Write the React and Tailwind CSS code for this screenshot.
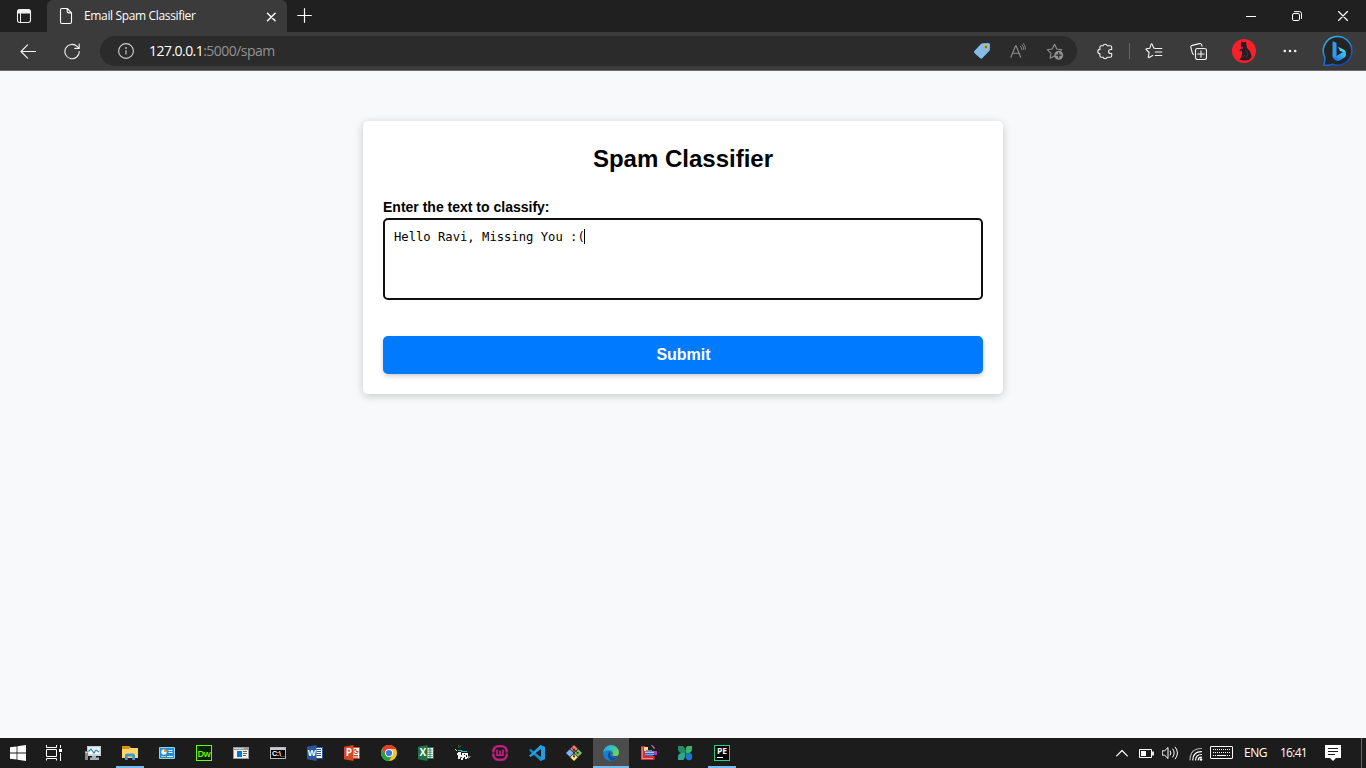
import React from "react";

function Icon({ w = 16, h, vb, children, className = "" }) {
  const hh = h || w;
  return (
    <svg
      width={w}
      height={hh}
      viewBox={vb || `0 0 ${w} ${hh}`}
      fill="none"
      stroke="currentColor"
      strokeWidth="1.1"
      strokeLinecap="round"
      strokeLinejoin="round"
      className={`block shrink-0 ${className}`}
    >
      {children}
    </svg>
  );
}

function TabStrip() {
  return (
    <div className="flex h-8 bg-[#202020] text-white">
      <div className="flex w-[47px] items-center pl-4">
        <Icon w={16} className="text-[#f0f0f0]">
          <rect x="1.5" y="1.5" width="13" height="13" rx="2.2" />
          <path d="M2 3.6Q2 2 3.6 2h8.8Q14 2 14 3.6V5H2Z" fill="currentColor" />
          <path d="M4.5 5v9" strokeWidth="1" />
        </Icon>
      </div>
      <div className="flex w-60 items-center rounded-t-[6px] bg-[#3b3b3b] pl-3">
        <Icon w={14} h={18}>
          <path d="M1.5 3Q1.5 1.5 3 1.5h5.2l4.3 4.3V15q0 1.5-1.5 1.5H3Q1.5 16.5 1.5 15Z" />
          <path d="M8.2 1.8V4.6q0 1.3 1.3 1.3h2.8" />
        </Icon>
        <div className="ml-[11px] w-[182px] whitespace-nowrap font-['Open_Sans',sans-serif] text-[12px] leading-4 tracking-[-0.35px]">
          Email Spam Classifier
        </div>
        <Icon w={10} className="mt-px">
          <path d="M1.5 1.2l7.6 7.6M9.1 1.2 1.5 8.8" strokeWidth="1.4" />
        </Icon>
      </div>
      <div className="flex w-[34px] items-center justify-center">
        <Icon w={15} className="-mt-px">
          <path d="M7.5 .7v13.6M.7 7.5h13.6" strokeWidth="1.2" />
        </Icon>
      </div>
      <div className="ml-auto flex">
        <div className="flex w-[46px] items-center justify-center">
          <Icon w={10}>
            <path d="M0 5.5h10" strokeWidth="1" strokeLinecap="butt" />
          </Icon>
        </div>
        <div className="flex w-[46px] items-center justify-center">
          <Icon w={10}>
            <rect x=".5" y="2.5" width="7" height="7" rx="1.4" strokeWidth="1" />
            <path d="M2.6 .6H7.5Q9.5 .6 9.5 2.6V7.4" strokeWidth="1" />
          </Icon>
        </div>
        <div className="flex w-[46px] items-center justify-center">
          <Icon w={10}>
            <path d="M.5 .5l9 9M9.5 .5l-9 9" strokeWidth="1.2" />
          </Icon>
        </div>
      </div>
    </div>
  );
}

function Toolbar() {
  return (
    <div className="flex h-[39px] items-center border-b border-[#6b6b6d] bg-[#3b3b3b] text-[#f3f3f3]">
      <div className="flex w-[56px] items-center justify-center">
        <Icon w={16} h={16} className="-mt-px">
          <path d="M15.5 8.5H1.2M7.6 1.8 1 8.5l6.6 6.7" />
        </Icon>
      </div>
      <div className="flex w-8 items-center justify-center">
        <Icon w={16} h={17}>
          <path d="M15.3 8.6A7.2 7.2 0 1 1 13.1 3.4L15.1 5.2M15.2 1v4.4h-4.4" />
        </Icon>
      </div>
      <div className="ml-3 flex h-[30px] w-[977px] items-center rounded-full bg-[#2b2b2b] pl-[18px]">
        <Icon w={16} className="text-[#d0d0d0]">
          <circle cx="8" cy="8" r="7.4" />
          <path d="M8 7.2v4.3" strokeLinecap="butt" />
          <circle cx="8" cy="5" r=".35" />
        </Icon>
        <div className="ml-[15px] whitespace-nowrap font-['Open_Sans',sans-serif] text-[14px] leading-5 tracking-[-0.54px] text-[#929292]">
          <span className="text-white">127.0.0.1</span>:5000/spam
        </div>
        <div className="ml-auto flex w-[113px] items-center">
          <div className="flex w-9 items-center justify-center">
            <Icon w={18}>
              <path
                d="M9.6 1.2 15.4 .9q1.6 0 1.6 1.6l-.2 5.2q0 .8-.6 1.4l-7 7.2q-1 .9-2 0L1.4 11q-.9-1 0-2L8.2 1.8q.6-.6 1.4-.6Z"
                fill="#83bdeb"
                stroke="none"
              />
              <circle cx="13" cy="5" r="1.5" fill="#5c5320" stroke="#e0b422" strokeWidth="1.2" />
            </Icon>
          </div>
          <div className="flex w-9 items-center justify-center text-[#8f8f8f]">
            <Icon w={16}>
              <path d="M.9 14.3 5.6 2.8h.5l4.6 11.5M2.6 10.2h6.5" />
              <path d="M10.5 3.3q1.4 1.3 1.3 3.4M12 1.8q2 2 1.8 4.8M13.5 .6q2.2 2.3 1.9 5.6" strokeWidth=".9" />
            </Icon>
          </div>
          <div className="flex w-9 items-center justify-center text-[#929292]">
            <Icon w={18} h={17} className="ml-px">
              <path d="M8.5 13 4.2 15.2 5 10.3 1.2 6.7l5-.7L8.5 1.2 10.8 6l5 .7-1 1" />
              <circle cx="12.7" cy="12.2" r="4.5" fill="currentColor" stroke="none" />
              <path d="M12.7 9.8v4.8M10.3 12.2h4.8" stroke="#2b2b2b" strokeWidth="1.2" />
            </Icon>
          </div>
        </div>
      </div>
      <div className="ml-2 flex w-10 items-center justify-center">
        <Icon w={16} h={17}>
          <path d="M4.4 2.7H6.1a2.1 1.9 0 0 1 4.1 0h3q1.5 0 1.5 1.5v2.3h-1.1a2 2 0 0 0 0 4h1.1v2.2q0 1.5-1.5 1.5h-3a2.1 1.9 0 0 1-4.1 0H4.4q-1.5 0-1.5-1.5v-2.1a2.1 2.1 0 0 1 0-4.2V4.2q0-1.5 1.5-1.5Z" />
        </Icon>
      </div>
      <div className="ml-1 h-4 w-px bg-[#666]" />
      <div className="ml-[2px] flex w-[44px] items-center justify-center">
        <Icon w={18} h={16}>
          <path d="M9.7 5.2H8.9L7.1 1.2q-.5-.9-1 0L4.8 5.3 1.3 5.8q-.5.3-.1.7L4.1 9.5 3.3 14q0 .9.8.5L7.7 12.4" />
          <path d="M10.5 5.5h6.3M10.3 9h6.5M10.3 12.5h6.5" />
        </Icon>
      </div>
      <div className="flex w-11 items-center justify-center">
        <Icon w={18} h={17}>
          <rect x="6.5" y="5.5" width="11" height="11" rx="2" />
          <path d="M12 7.8v6.4M8.8 11h6.4" />
          <path d="M4.6 11.4Q3.7 11 3.3 9.8L1.9 4.7Q1.4 2.9 3.2 2.4L10.4 .6q1.8-.3 2.3 1.4l.3 1.2" />
        </Icon>
      </div>
      <div className="ml-[12px] size-6">
        <svg width="24" height="24" viewBox="0 0 24 24" className="block">
          <circle cx="12" cy="12" r="12" fill="#f91f2b" />
          <path
            d="M9.6 1.8 10.8 3.4Q12 2.8 13.2 3.2L14 2.6 14.6 8 15.8 10Q18.4 11.8 18.9 15L19.6 18.2 17 21 11.6 21.6 7.4 20.4 9.6 18 10.2 13.4 9.4 11.6 7.2 12 9.2 9.2 8.9 6Z"
            fill="#251b20"
          />
          <path d="m9.4 7.8 1.4.3-.3 1.9-1 .2Z" fill="#9b5a48" />
          <path d="m13 11 3 4-2 4M10 19l3-3" stroke="#514047" fill="none" strokeWidth=".8" />
        </svg>
      </div>
      <div className="ml-3 flex w-11 items-center justify-center">
        <Icon w={14} h={4}>
          <g fill="currentColor" stroke="none">
            <circle cx="1.8" cy="2" r="1.3" />
            <circle cx="7" cy="2" r="1.3" />
            <circle cx="12.2" cy="2" r="1.3" />
          </g>
        </Icon>
      </div>
      <div className="ml-[10px]">
        <svg width="32" height="32" viewBox="0 0 32 32" className="block">
          <defs>
            <linearGradient id="bingRing" x1="0" y1="0" x2=".6" y2="1">
              <stop stopColor="#36c2e5" />
              <stop offset=".5" stopColor="#2189df" />
              <stop offset="1" stopColor="#1747bd" />
            </linearGradient>
            <linearGradient id="bingSwoosh" x1="0" y1="1" x2="1" y2="0">
              <stop stopColor="#1766e8" />
              <stop offset="1" stopColor="#46d3ee" />
            </linearGradient>
          </defs>
          <path
            d="M1.7 30Q3 26.5 2.9 22.4A14.3 14.3 0 1 1 10.6 29.2Q6 31 1.7 30Z"
            fill="#242424"
            stroke="url(#bingRing)"
            strokeWidth="1.5"
          />
          <path d="m10.6 6.2 3.2 1.2q.7.4.7 1.3v12.8l-2.3 2q-1.7-.6-1.7-2.6Z" fill="#2c9df5" />
          <path d="m16 11.8 5.6 2.6q2.6 1.3 2.4 4.7-.5-1.6-2.8-2l-3.2-1.2Z" fill="#46d3ee" />
          <path d="m11.4 23 9.1-5.8q3.6-.3 3.5 2.6 0 1.6-1.4 2.7l-4.8 2.9q-2.1 1-4.4-.1-1.6-.8-2-2.3Z" fill="url(#bingSwoosh)" />
        </svg>
      </div>
    </div>
  );
}

function Page() {
  return (
    <main className="h-[667px] bg-[#f8f9fa] pt-[50px] font-['Liberation_Sans',Arial,sans-serif] text-black">
      <div className="mx-auto h-[273px] w-[640px] rounded-[5px] bg-white px-5 pt-5 shadow-[0_2px_10px_rgba(0,0,0,0.2)]">
        <h1 className="text-center text-[24px] font-bold leading-9">Spam Classifier</h1>
        <label className="mt-5 block text-[14px] font-bold leading-[21px]">Enter the text to classify:</label>
        <div className="flex h-[82px] rounded-[5px] border-2 border-[#101010] bg-white pl-[9px] pt-[9px] font-['DejaVu_Sans_Mono',monospace] text-[12.2px] leading-4">
          <span className="w-[190px] whitespace-pre">Hello Ravi, Missing You :(</span>
          <span className="h-[15px] w-px bg-black" />
        </div>
        <button className="mt-9 block h-[38px] w-full rounded-[5px] bg-[#007bff] pl-px text-center text-[16px] font-bold leading-[38px] text-white shadow-[0_2px_5px_rgba(0,0,0,0.2)]">
          Submit
        </button>
      </div>
    </main>
  );
}

function Windows() {
  return (
    <svg width="16" height="16" viewBox="0 0 16 16" fill="#fff">
      <path d="M0 2.3 6.6 1.4V7.6H0ZM7.4 1.3 16 0V7.6H7.4ZM0 8.4H6.6v6.2L0 13.7ZM7.4 8.4H16V16L7.4 14.7Z" />
    </svg>
  );
}

function TaskView() {
  return (
    <svg width="16" height="16" viewBox="0 0 16 16" fill="none" stroke="#fff">
      <path d="M.5 0v2.5h10V0M.5 15.5V13.5h10v2M.5 4.5h10v7H.5ZM14.5 0v3M14.5 8v8" />
      <path d="M13 4h3v3h-3Z" fill="#fff" stroke="none" />
    </svg>
  );
}

function Monitor() {
  return (
    <svg width="18" height="16" viewBox="0 0 18 16">
      <path d="M3 1h14v10H3Z" fill="#c7cdd1" />
      <path d="M4.3 2.3h11.4v7H4.3Z" fill="#f1f8fb" />
      <path d="M4.5 6.5 7 4l3 4 2-3 3 2" fill="none" stroke="#2386b7" strokeWidth="1.1" />
      <path d="M8 11h4v1.5h3V15H6v-2.5h2Z" fill="#a9afb2" />
      <path d="M1 6h3v9H1Z" fill="#858c90" />
      <path d="M1.5 7h2v1h-2Z" fill="#d9dddf" />
    </svg>
  );
}

function Explorer() {
  return (
    <svg width="16" height="16" viewBox="0 0 16 16">
      <path d="M0 1h7l2 2h7v10H0Z" fill="#f5bd35" />
      <path d="M0 1h7l1 1.5L7 4H0Z" fill="#d9930f" />
      <path d="M0 4h7l1.5-1H16v10H0Z" fill="#ffd667" />
      <path d="M3 15V10.5q0-2 2-2h6q2 0 2 2V15h-2.7v-3.5H5.7V15Z" fill="#3f97d5" />
    </svg>
  );
}

function ControlPanel() {
  return (
    <svg width="16" height="14" viewBox="0 0 16 14">
      <rect y="1" width="16" height="12" rx="1" fill="#8bd0f5" />
      <rect x="1" y="2" width="14" height="10" fill="#268ed0" />
      <circle cx="5" cy="6" r="2.7" fill="#e9f6fc" />
      <path d="M5 6V3.3A2.7 2.7 0 0 1 7.7 6Z" fill="#f08b2a" />
      <path d="M9.5 4.5h4M9.5 6.5h4" stroke="#e9f6fc" />
      <path d="M2 10.5h5" stroke="#f8ba3e" />
      <path d="M8 10.5h6" stroke="#fff" />
    </svg>
  );
}

function Dreamweaver() {
  return (
    <span className="flex size-4 items-center justify-center border border-[#6ffa00] bg-[#072401] font-['Open_Sans',sans-serif] text-[9px] font-semibold leading-none tracking-[-0.4px] text-[#75f900]">
      Dw
    </span>
  );
}

function NewsApp() {
  return (
    <svg width="16" height="12" viewBox="0 0 16 12">
      <path d="M0 0h16v12H0Z" fill="#9a9a9a" />
      <path d="M1 3h14v8H1Z" fill="#f1f1f1" />
      <path d="M1 1h10v1H1Z" fill="#d7d7d7" />
      <path d="M4 4h5v6H4Z" fill="#0078d7" />
      <path d="M10 4.5h4M10 6.5h4M10 8.5h3" stroke="#646464" />
    </svg>
  );
}

function Terminal() {
  return (
    <span className="flex h-3 w-4 flex-col border border-[#b7bbbe] bg-black">
      <span className="h-0.5 shrink-0 bg-[#c5cbd0]" />
      <span className="whitespace-nowrap pl-px font-['Liberation_Sans',sans-serif] text-[7px] font-bold leading-[8px] tracking-[-0.2px] text-white">
        C:\_
      </span>
    </span>
  );
}

function OfficeIcon({ letter, color, kind }) {
  return (
    <svg width="16" height="16" viewBox="0 0 16 16">
      <path d="M8 2.5h7.5v11H8Z" fill="#fff" stroke={color} />
      {kind === "w" && <path d="M9.5 4.5h4.5M9.5 6.5h4.5M9.5 8.5h4.5M9.5 10.5h4.5" stroke={color} />}
      {kind === "p" && (
        <g stroke={color} fill="none">
          <path d="M9.5 10.5h4.5M9.5 12h4.5" />
          <path d="M12 4.2v2.3h2.2A2.2 2.2 0 1 1 12 4.2Z" />
        </g>
      )}
      {kind === "x" && <path d="M9.5 5h5M9.5 7.2h5M9.5 9.4h5M9.5 11.6h5M12 3v10" stroke={color} strokeWidth=".8" />}
      <path d="M0 1.8 9.5 0v16L0 14.2Z" fill={color} />
      <text x="4.8" y="11.4" textAnchor="middle" fill="#fff" fontFamily="Open Sans" fontSize={kind === "w" ? 8.5 : 10} fontWeight="700">
        {letter}
      </text>
    </svg>
  );
}

function Chrome() {
  return (
    <svg width="16" height="16" viewBox="0 0 16 16">
      <circle cx="8" cy="8" r="8" fill="#fbc617" />
      <path d="M8 8 4.6 10 1.07 4A8 8 0 0 1 14.93 4H8Z" fill="#e63b2e" />
      <path d="M1.07 4A8 8 0 0 0 8 16L11.4 10H8L4.6 10Z" fill="#259d49" />
      <circle cx="8" cy="8" r="4" fill="#fff" />
      <circle cx="8" cy="8" r="3.1" fill="#3978e5" />
    </svg>
  );
}

function PixelTool() {
  return (
    <svg width="16" height="16" viewBox="0 0 16 16" shapeRendering="crispEdges">
      <path d="M4 1h2v1H4ZM3 2h1v1H3ZM3 0h1v1H3Z" fill="#167028" />
      <path d="M0 4h1v1h1v1H1V5H0Z" fill="#f0dc45" />
      <path d="M3 7h3v1h7v5h-1v1h-2v-2H9v1H8v2H6v-2H5v1H3v-4H2V8h1Z" fill="#f4f4f4" />
      <path d="M3 5h4v1h5v1H6V6H3Z" fill="#18b6cb" />
      <path d="M6 8h1v2H6ZM9 9h1v1H9ZM11 10h1v2h-1Z" fill="#171717" />
      <path d="M5 12h2v1H5Z" fill="#c3252b" />
      <path d="M13 11h3v1h-1v1h-1v1h-1Z" fill="#777" />
    </svg>
  );
}

function Wamp() {
  return (
    <svg width="16" height="16" viewBox="0 0 16 16" fill="none" stroke="#d4198a">
      <rect x="1.3" y="1.3" width="13.4" height="13.4" rx="5" stroke="#8f2466" strokeWidth="2.6" />
      <rect x="1.3" y="1.3" width="13.4" height="13.4" rx="5" strokeWidth="1.4" />
      <path d="M5 4.5v5.7h2.2L8 9.4l.8.8H11V4.5M8 5.5v4" strokeWidth="1.6" />
      <path d="M0 8h3M13 8h3" stroke="#1c1c1c" />
    </svg>
  );
}

function VSCode() {
  return (
    <svg width="16" height="16" viewBox="0 0 16 16">
      <path d="m11.5 0 4.5 2v12l-4.5 2L1 6.2l-1-.9L1.4 4l1 .4L12 11.7V4.3Z" fill="#168bd2" />
      <path d="M11.5 0 1 9.8l-1 .9L1.4 12l1-.4L12 4.3v7.4l-.5 4.3L16 14V2Z" fill="#219fe2" />
      <path d="m11.7 4.3-4.8 3.7 4.8 3.7Z" fill="#1c1c1c" />
    </svg>
  );
}

function Git() {
  return (
    <svg width="16" height="16" viewBox="0 0 16 16">
      <path d="m8 0 3.8 3.8L8 7.6 4.2 3.8Z" fill="#f0786c" />
      <path d="m3.8 4.2 3.8 3.8-3.8 3.8L0 8Z" fill="#80b3ff" />
      <path d="m12.2 4.2 3.8 3.8-3.8 3.8L8.4 8Z" fill="#7fc257" />
      <path d="m8 8.4 3.8 3.8L8 16l-3.8-3.8Z" fill="#ffe681" />
      <path d="M6 2.5 8 5v7M8 5l3.5 2.5" fill="none" stroke="#363636" />
      <circle cx="8" cy="4.8" r="1.1" fill="#363636" />
      <circle cx="11.7" cy="8" r="1.1" fill="#363636" />
      <circle cx="8" cy="11.5" r="1.1" fill="#363636" />
    </svg>
  );
}

function Edge() {
  return (
    <svg width="16" height="16" viewBox="0 0 16 16">
      <defs>
        <linearGradient id="edgeTop" x1="0" y1="0" x2="1" y2=".5">
          <stop stopColor="#25a8e9" />
          <stop offset=".6" stopColor="#38c4b7" />
          <stop offset="1" stopColor="#65d65d" />
        </linearGradient>
      </defs>
      <path d="M0 8Q1 3.5 5.5 4 9.5 4.8 9 7.5 7.8 11 11 11.9 13 12.4 15 11.5 12.9 16 8 16A8 8 0 0 1 0 8Z" fill="#1681d1" />
      <path d="M.1 7A8 8 0 0 1 16 7.4q0 3.6-3.8 3.6-3.1 0-3.1-1.2 1.1-1 .5-2.6Q8.8 5 5.8 5 2.5 5 .1 7Z" fill="url(#edgeTop)" />
      <path d="M6.4 6.7Q3.8 9.4 5.5 12.9 7.2 15.6 9.8 15.7 13.2 14.8 15 11.8 11.2 13.6 8.6 11.8 6.5 9.8 7.6 7.2Z" fill="#124e98" />
    </svg>
  );
}

function Archive() {
  return (
    <svg width="17" height="16" viewBox="0 0 17 16">
      <path d="M1 1h4v10h9v4H1Z" fill="#cf2f36" />
      <path d="M2.2 2.2v11.3H13" fill="none" stroke="#ffaaa4" strokeWidth=".8" />
      <path d="M4 2h4v4H4Z" fill="#f2dd92" />
      <path d="M6 5h6v1H6Z" fill="#9d62dc" />
      <path d="M5 6h10v2H5Z" fill="#48a960" />
      <path d="M5 7.5h9M5 9.5h10" stroke="#b8e9fc" strokeWidth=".7" />
      <path d="M5 8h10v1H5ZM5 10h8v1H5Z" fill="#4358d9" />
      <path d="m11 0 1 0 3 3-1 1Z" fill="#c779ec" />
      <path d="M14 6h3v4h-3Z" fill="#a736c0" />
      <path d="M13 11h1.5v4H13Z" fill="#cf2f36" />
    </svg>
  );
}

function Clover() {
  return (
    <svg width="15" height="16" viewBox="0 0 15 16">
      <path d="M0 1h5q2 1 2 4v3H3Q0 7 0 4Z" fill="#258a62" />
      <path d="M14 1H9.5Q7.5 2 7.5 5v3H11q3-1 3-4Z" fill="#3bb36f" />
      <path d="M0 15v-3q0-3 3-4h4v3q0 3-2 4Z" fill="#31a58f" />
      <path d="M7.5 8H11q3 0 3 2l-5 4Q7.5 13 7.5 10Z" fill="#267c75" />
      <circle cx="11" cy="12" r="3.2" fill="#147bd4" />
    </svg>
  );
}

function PyCharmEdu() {
  return (
    <span className="flex size-4 flex-col border border-[#23d18b] bg-black pl-[2px] pt-px">
      <span className="font-['Open_Sans',sans-serif] text-[8.5px] font-bold leading-[8px] text-white">PE</span>
      <span className="mt-[2px] h-px w-1.5 bg-white" />
    </span>
  );
}

const PINNED = [
  { name: "monitor", icon: <Monitor /> },
  { name: "explorer", icon: <Explorer />, open: true },
  { name: "control", icon: <ControlPanel /> },
  { name: "dw", icon: <Dreamweaver /> },
  { name: "news", icon: <NewsApp /> },
  { name: "cmd", icon: <Terminal /> },
  { name: "word", icon: <OfficeIcon letter="W" color="#2b579a" kind="w" /> },
  { name: "ppt", icon: <OfficeIcon letter="P" color="#d24726" kind="p" /> },
  { name: "chrome", icon: <Chrome /> },
  { name: "excel", icon: <OfficeIcon letter="X" color="#217346" kind="x" /> },
  { name: "pixel", icon: <PixelTool /> },
  { name: "wamp", icon: <Wamp /> },
  { name: "code", icon: <VSCode /> },
  { name: "git", icon: <Git /> },
  { name: "edge", icon: <Edge />, active: true },
  { name: "archive", icon: <Archive /> },
  { name: "clover", icon: <Clover /> },
  { name: "pycharm", icon: <PyCharmEdu />, open: true },
];

function Taskbar() {
  return (
    <div className="flex h-[30px] bg-[#1c1c1c] text-white">
      <div className="flex w-9 items-center justify-center"><Windows /></div>
      <div className="flex w-9 items-center justify-center"><TaskView /></div>
      <div className="ml-[3px] flex gap-px">
        {PINNED.map((p) => (
          <div key={p.name} className={`flex w-9 flex-col items-center ${p.active ? "bg-[#4c4c4c]" : ""}`}>
            <div className="flex h-7 items-center justify-center pt-[2px]">{p.icon}</div>
            <div className={`h-0.5 ${p.active ? "w-9 bg-[#76b9ed]" : p.open ? "w-7 bg-[#76b9ed]" : "w-7"}`} />
          </div>
        ))}
      </div>
      <div className="ml-auto flex items-center">
        <Icon w={12} h={8}>
          <path d="M.7 6.8 6 1.5l5.3 5.3" strokeWidth="1.2" />
        </Icon>
        <Icon w={15} h={10} className="ml-[11px] mt-px">
          <g strokeLinecap="butt" strokeWidth="1">
            <path d="M.5 .5h12v8H.5Z" />
            <path d="M14 2.5v4" strokeWidth="1.8" />
            <path d="M2 2h5v5H2Z" fill="currentColor" stroke="none" />
          </g>
        </Icon>
        <Icon w={17} h={14} className="ml-[8px]">
          <path d="M.6 4.8h2L6 1.5v11L2.6 9.2h-2Z" strokeWidth="1" />
          <path d="M8.3 5q1.3 2 0 4M10.8 3q3 4 0 8M13.3 1.2q4.5 5.8 0 11.6" strokeWidth="1" />
        </Icon>
        <Icon w={14} h={14} className="ml-[10px] mt-[2px]">
          <g strokeWidth="1.2">
            <path d="M1 13Q1.2 1.5 12.5 1.5" stroke="#b0b0b0" />
            <path d="M3.8 13Q4 4.6 12.5 4.6" />
            <path d="M6.6 13Q6.8 7.5 12.5 7.5" />
            <path d="M9.2 13q.2-2.8 3.3-2.8" />
            <circle cx="12" cy="12.5" r="1.3" fill="currentColor" stroke="none" />
          </g>
        </Icon>
        <Icon w={23} h={13} className="ml-[7px] -mt-px">
          <g strokeWidth="1" strokeLinecap="butt">
            <rect x=".5" y=".5" width="22" height="12" rx=".4" />
            <path d="M3 3.5h17M3 6.5h17" strokeDasharray="1 1" />
            <path d="M7 9.5h9M3 9.5h1M5 9.5h1M17 9.5h1M19 9.5h1" />
          </g>
        </Icon>
        <span className="ml-[11px] w-[24px] whitespace-nowrap font-['Open_Sans',sans-serif] text-[12px] leading-4 tracking-[-0.5px]">ENG</span>
        <span className="ml-[12px] w-[28px] whitespace-nowrap font-['Open_Sans',sans-serif] text-[12px] leading-4 tracking-[-0.75px]">16:41</span>
        <svg width="16" height="16" viewBox="0 0 16 16" className="ml-[17px] block">
          <path d="M0 0h16v13h-5L8 16 5 13H0Z" fill="#fff" />
          <path d="M3 3.5h10M3 6.5h10M3 9.5h7" stroke="#1c1c1c" />
        </svg>
        <span className="ml-5 mr-1 h-[30px] w-px bg-[#666]" />
      </div>
    </div>
  );
}

export default function App() {
  return (
    <div className="flex h-[768px] w-[1366px] flex-col overflow-hidden">
      <TabStrip />
      <Toolbar />
      <Page />
      <Taskbar />
    </div>
  );
}
